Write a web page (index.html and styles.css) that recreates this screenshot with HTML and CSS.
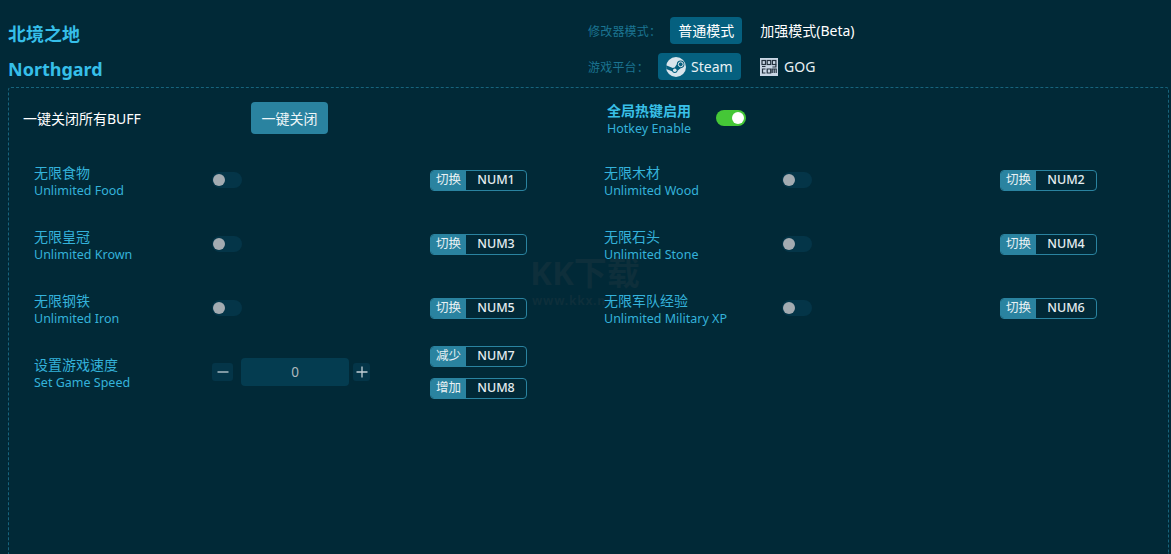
FILE: index.html
```html
<!DOCTYPE html>
<html lang="zh-CN">
<head>
<meta charset="utf-8">
<title>北境之地 Northgard</title>
<link rel="stylesheet" href="styles.css">
</head>
<body>
<header class="header">
  <div class="titles">
    <h1 class="title">北境之地</h1>
    <h1 class="title">Northgard</h1>
  </div>
  <div class="options">
    <div class="opt-row">
      <span class="opt-label">修改器模式：</span>
      <span class="opt-btn active mode-first">普通模式</span>
      <span class="opt-btn mode-second">加强模式(Beta)</span>
    </div>
    <div class="opt-row">
      <span class="opt-label">游戏平台：</span>
      <span class="opt-btn active steam">
        <svg class="icon" viewBox="0 0 20 20"><circle cx="10" cy="10" r="10" fill="#d8e4ec"/><path d="M0.300 12 6 14.300a3 3 0 0 0 5.700-.9l3-2.200a3.800 3.800 0 1 0-3.900-3.900L8.700 10.600a3 3 0 0 0-1.900.4L0 8.200z" fill="#05607f"/><circle cx="14.700" cy="7.300" r="2.400" fill="none" stroke="#d8e4ec" stroke-width="1"/><circle cx="8.800" cy="13.300" r="1.800" fill="#d8e4ec"/></svg>
        Steam
      </span>
      <span class="opt-btn gog">
        <svg class="icon-gog" viewBox="0 0 18 18"><rect width="18" height="18" fill="#c9d6e4"/><g fill="none" stroke="#24323f" stroke-width="1.200"><rect x="2" y="2.500" width="3.500" height="4"/><rect x="7.200" y="2.500" width="3.500" height="4"/><rect x="12.400" y="2.500" width="3.500" height="4"/><path d="M2 8.500h3.500M15.900 6.500v2.500h-3.500"/><path d="M5.500 11H2.500v4h3M7.200 11h3.500v4H7.200zM12.200 15v-4h4v4M14.200 11v4"/></g></svg>
        GOG
      </span>
    </div>
  </div>
</header>

<main class="panel">
  <div class="top">
    <div class="top-left">
      <span class="all-label">一键关闭所有BUFF</span>
      <button class="close-btn">一键关闭</button>
    </div>
    <div class="top-right">
      <div class="hotkey-text">
        <div class="hotkey-zh">全局热键启用</div>
        <div class="en">Hotkey Enable</div>
      </div>
      <span class="toggle on"></span>
    </div>
  </div>

  <div class="grid">
    <div class="item">
      <div class="name"><div class="zh">无限食物</div><div class="en">Unlimited Food</div></div>
      <span class="toggle"></span>
      <div class="keys"><div class="key"><span class="key-tag">切换</span><span class="key-val">NUM1</span></div></div>
    </div>
    <div class="item">
      <div class="name"><div class="zh">无限木材</div><div class="en">Unlimited Wood</div></div>
      <span class="toggle"></span>
      <div class="keys"><div class="key"><span class="key-tag">切换</span><span class="key-val">NUM2</span></div></div>
    </div>
    <div class="item">
      <div class="name"><div class="zh">无限皇冠</div><div class="en">Unlimited Krown</div></div>
      <span class="toggle"></span>
      <div class="keys"><div class="key"><span class="key-tag">切换</span><span class="key-val">NUM3</span></div></div>
    </div>
    <div class="item">
      <div class="name"><div class="zh">无限石头</div><div class="en">Unlimited Stone</div></div>
      <span class="toggle"></span>
      <div class="keys"><div class="key"><span class="key-tag">切换</span><span class="key-val">NUM4</span></div></div>
    </div>
    <div class="item">
      <div class="name"><div class="zh">无限钢铁</div><div class="en">Unlimited Iron</div></div>
      <span class="toggle"></span>
      <div class="keys"><div class="key"><span class="key-tag">切换</span><span class="key-val">NUM5</span></div></div>
    </div>
    <div class="item">
      <div class="name"><div class="zh">无限军队经验</div><div class="en">Unlimited Military XP</div></div>
      <span class="toggle"></span>
      <div class="keys"><div class="key"><span class="key-tag">切换</span><span class="key-val">NUM6</span></div></div>
    </div>
    <div class="item">
      <div class="name"><div class="zh">设置游戏速度</div><div class="en">Set Game Speed</div></div>
      <div class="stepper">
        <span class="step minus">
          <svg viewBox="0 0 12 12"><path d="M0.500 6h11" stroke="#c3d0d6" stroke-width="1.300"/></svg>
        </span>
        <span class="step-value">0</span>
        <span class="step plus">
          <svg viewBox="0 0 12 12"><path d="M0.500 6h11M6 0.500v11" stroke="#c3d0d6" stroke-width="1.300"/></svg>
        </span>
      </div>
      <div class="keys">
        <div class="key"><span class="key-tag">减少</span><span class="key-val">NUM7</span></div>
        <div class="key"><span class="key-tag">增加</span><span class="key-val">NUM8</span></div>
      </div>
    </div>
  </div>
</main>

<div class="watermark">
  <div class="wm-big">KK下载</div>
  <div class="wm-small">www.kkx.n</div>
</div>
</body>
</html>
```

FILE: styles.css
```css
* { box-sizing: border-box; }

html, body { height: 100%; }

body {
  margin: 0;
  padding: 0 2px 0 8px;
  height: 554px;
  overflow: hidden;
  background: #012937;
  font-family: "Noto Sans", "Noto Sans CJK SC", sans-serif;
  font-size: 13px;
  color: #39c0e8;
  display: flex;
  flex-direction: column;
}

.header {
  display: flex;
  height: 87px;
  flex: none;
}

.titles {
  width: 580px;
  padding-top: 22px;
  display: flex;
  flex-direction: column;
  gap: 10px;
}

.title {
  margin: 0;
  font-size: 18px;
  line-height: 25px;
  font-weight: 700;
  color: #36bfe9;
}

.options {
  padding-top: 17px;
  display: flex;
  flex-direction: column;
  gap: 9px;
}

.opt-row {
  display: flex;
  align-items: center;
  height: 27px;
}

.opt-label {
  font-size: 12px;
  color: #1b7491;
  letter-spacing: 0.2px;
}

.opt-btn {
  display: inline-flex;
  align-items: center;
  height: 27px;
  border-radius: 4px;
  font-size: 14px;
  color: #fff;
}

.active { background: #05607f; }

.mode-first {
  width: 72px;
  justify-content: center;
  margin-left: 9px;
  padding-bottom: 2px;
}

.mode-second {
  margin-left: 18px;
  padding-bottom: 2px;
}

.steam {
  width: 83px;
  margin-left: 9px;
  padding-left: 8px;
  gap: 5px;
  color: #e8f1f4;
}

.gog {
  margin-left: 19px;
  gap: 6px;
  color: #e8f1f4;
}

.icon { width: 20px; height: 20px; }
.icon-gog { width: 18px; height: 18px; }

.panel {
  flex: 1;
  border: 1px dashed #17647d;
  border-bottom: 0;
  border-radius: 3px 3px 0 0;
  padding: 13px 0 0 25px;
}

.top {
  display: flex;
  height: 33px;
  margin-left: -11px;
}

.top-left {
  width: 584px;
  display: flex;
  align-items: center;
}

.all-label {
  width: 228px;
  color: #fff;
  font-size: 14px;
}

.close-btn {
  width: 77px;
  height: 32px;
  border: 0;
  border-radius: 4px;
  padding: 0;
  background: #2a83a0;
  color: #eef6f8;
  font: inherit;
  font-size: 14px;
}

.top-right {
  display: flex;
  align-items: center;
  gap: 25px;
}

.hotkey-text { padding-top: 6px; }

.hotkey-zh {
  font-size: 14px;
  line-height: 17px;
  font-weight: 700;
  color: #39c0e8;
}

.en {
  font-size: 12.500px;
  line-height: 20px;
  color: #34b2da;
}

.zh {
  font-size: 14px;
  line-height: 17px;
  color: #34b2da;
}

.grid {
  margin-top: 14px;
  display: grid;
  grid-template-columns: 570px 570px;
  grid-auto-rows: 64px;
}

.item {
  display: flex;
  align-items: center;
  height: 64px;
}

.name {
  width: 178px;
  padding-top: 4px;
}

.toggle {
  display: block;
  position: relative;
  flex: none;
  width: 30px;
  height: 16px;
  border-radius: 8px;
  background: #043548;
}

.toggle::after {
  content: "";
  position: absolute;
  left: 1px;
  top: 2px;
  width: 12px;
  height: 12px;
  border-radius: 50%;
  background: #a3abb1;
}

.toggle.on { background: #45c737; }

.toggle.on::after {
  left: auto;
  right: 2px;
  background: #fff;
}

.keys {
  flex: none;
  margin-left: 188px;
  display: flex;
  flex-direction: column;
  gap: 11px;
}

.key {
  display: flex;
  width: 97px;
  height: 21px;
  border: 1px solid #2a83a0;
  border-radius: 4px;
  overflow: hidden;
  font-size: 12.500px;
  line-height: 17px;
}

.key-tag {
  width: 35px;
  flex: none;
  background: #2a83a0;
  color: #e8f1f4;
  text-align: center;
}

.key-val {
  flex: 1;
  text-align: center;
  font-size: 12.500px;
  line-height: 18px;
  font-weight: 500;
  color: #e5edf0;
}

.stepper {
  width: 158px;
  flex: none;
  display: flex;
  align-items: center;
  margin-right: 60px;
}

.stepper + .keys { margin-left: 0; }

.step {
  display: flex;
  align-items: center;
  justify-content: center;
  flex: none;
  width: 21px;
  height: 18px;
  border-radius: 3px;
  background: #043548;
}

.step.plus { width: 17px; }

.step svg { width: 12px; height: 12px; }

.step-value {
  width: 108px;
  height: 28px;
  margin: 0 4px 0 8px;
  border-radius: 4px;
  background: #043c50;
  color: #aeb8bd;
  font-size: 13.500px;
  line-height: 28px;
  text-align: center;
}

.watermark {
  position: absolute;
  z-index: -1;
  left: 530px;
  top: 257px;
  color: #0e2f3b;
  font-weight: 700;
  pointer-events: none;
}

.wm-big {
  font-size: 33px;
  line-height: 32px;
  white-space: nowrap;
}

.wm-small {
  margin-top: 5px;
  padding-left: 2px;
  font-size: 12px;
  line-height: 14px;
  letter-spacing: 0.800px;
}
```
